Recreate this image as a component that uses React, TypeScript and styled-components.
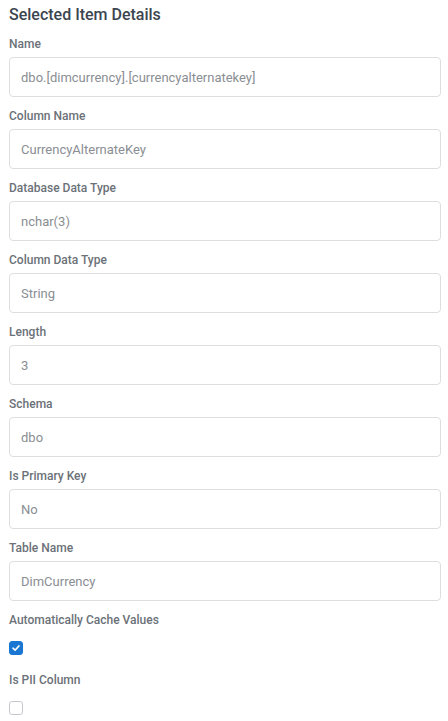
import React from "react";
import styled, { createGlobalStyle } from "styled-components";

interface IField {
  label: string;
  value: string;
}

const fields: Array<IField> = [
  { label: "Name", value: "dbo.[dimcurrency].[currencyalternatekey]" },
  { label: "Column Name", value: "CurrencyAlternateKey" },
  { label: "Database Data Type", value: "nchar(3)" },
  { label: "Column Data Type", value: "String" },
  { label: "Length", value: "3" },
  { label: "Schema", value: "dbo" },
  { label: "Is Primary Key", value: "No" },
  { label: "Table Name", value: "DimCurrency" },
];

const GlobalStyle = createGlobalStyle`
  body {
    margin: 0;
    background: #ffffff;
    font-family: Roboto, "Liberation Sans", sans-serif;
  }
`;

const Panel = styled.div`
  display: flex;
  flex-direction: column;
  padding: 5px 7px 0 9px;
`;

const Title = styled.h3`
  margin: 0 0 11px 0;
  font-size: 16px;
  line-height: 20px;
  font-weight: 500;
  color: #3b4550;
`;

const Field = styled.div`
  display: flex;
  flex-direction: column;
  margin-bottom: 11px;
`;

const Label = styled.label`
  font-size: 12px;
  line-height: 16px;
  font-weight: 500;
  color: #6b7178;
  margin-bottom: 5px;
`;

const ReadOnlyInput = styled.div`
  box-sizing: border-box;
  height: 40px;
  display: flex;
  align-items: center;
  padding: 0 11px;
  border: 1px solid #dedede;
  border-radius: 4px;
  font-size: 13px;
  color: #8a8e93;
`;

const CheckBox = styled.span<{ $checked?: boolean }>`
  box-sizing: border-box;
  width: 14px;
  height: 14px;
  margin-top: 8px;
  border-radius: 3px;
  display: flex;
  align-items: center;
  justify-content: center;
  border: 1px solid ${(p) => (p.$checked ? "#1976d2" : "#c4c8cc")};
  background: ${(p) => (p.$checked ? "#1976d2" : "#ffffff")};
`;

const CheckField = styled(Field)`
  margin-bottom: 17px;
`;

function Check({ checked }: { checked?: boolean }) {
  return (
    <CheckBox $checked={checked}>
      {checked && (
        <svg width="10" height="10" viewBox="0 0 10 10">
          <path
            d="M2 5.2 L4.1 7.2 L8 2.9"
            fill="none"
            stroke="#ffffff"
            strokeWidth="1.6"
            strokeLinecap="round"
            strokeLinejoin="round"
          />
        </svg>
      )}
    </CheckBox>
  );
}

export default function App() {
  return (
    <>
      <GlobalStyle />
      <Panel>
        <Title>Selected Item Details</Title>
        {fields.map((f) => (
          <Field key={f.label}>
            <Label>{f.label}</Label>
            <ReadOnlyInput>{f.value}</ReadOnlyInput>
          </Field>
        ))}
        <CheckField>
          <Label>Automatically Cache Values</Label>
          <Check checked />
        </CheckField>
        <CheckField>
          <Label>Is PII Column</Label>
          <Check />
        </CheckField>
      </Panel>
    </>
  );
}
